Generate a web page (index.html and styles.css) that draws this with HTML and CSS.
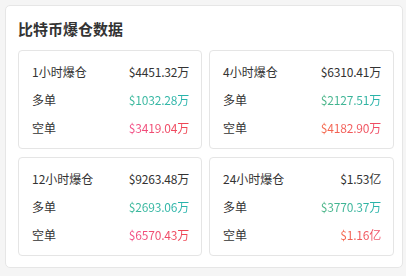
FILE: index.html
```html
<!DOCTYPE html>
<html lang="zh">
<head>
<meta charset="utf-8">
<link rel="stylesheet" href="styles.css">
</head>
<body>
<div class="panel">
  <h2 class="title">比特币爆仓数据</h2>
  <div class="grid">
    <div class="box">
      <div class="row"><span class="label">1小时爆仓</span><span class="val">$4451.32万</span></div>
      <div class="row"><span class="label">多单</span><span class="val up up-a">$1032.28万</span></div>
      <div class="row"><span class="label">空单</span><span class="val down down-a">$3419.04万</span></div>
    </div>
    <div class="box">
      <div class="row"><span class="label">4小时爆仓</span><span class="val">$6310.41万</span></div>
      <div class="row"><span class="label">多单</span><span class="val up">$2127.51万</span></div>
      <div class="row"><span class="label">空单</span><span class="val down">$4182.90万</span></div>
    </div>
    <div class="box">
      <div class="row"><span class="label">12小时爆仓</span><span class="val">$9263.48万</span></div>
      <div class="row"><span class="label">多单</span><span class="val up up-a">$2693.06万</span></div>
      <div class="row"><span class="label">空单</span><span class="val down down-a">$6570.43万</span></div>
    </div>
    <div class="box">
      <div class="row"><span class="label">24小时爆仓</span><span class="val">$1.53亿</span></div>
      <div class="row"><span class="label">多单</span><span class="val up">$3770.37万</span></div>
      <div class="row"><span class="label">空单</span><span class="val down">$1.16亿</span></div>
    </div>
  </div>
</div>
</body>
</html>
```

FILE: styles.css
```css
html, body {
  margin: 0;
  padding: 0;
  background: #f5f5f5;
}
body {
  padding: 5px 3px 0 5px;
  font-family: "Noto Sans CJK SC", "Noto Sans", sans-serif;
  color: #333;
}
.panel {
  box-sizing: border-box;
  width: 398px;
  height: 263px;
  background: #fff;
  border: 1px solid #e6e6e6;
  border-radius: 5px;
  padding: 12px 9px 12px 12px;
}
.title {
  margin: 0 0 10px 0;
  font-size: 15px;
  line-height: 22px;
  font-weight: 700;
  color: #333;
}
.grid {
  display: grid;
  grid-template-columns: 184px 185px;
  grid-auto-rows: 99px;
  column-gap: 7px;
  row-gap: 8px;
}
.box {
  box-sizing: border-box;
  border: 1px solid #e5e5e5;
  border-radius: 4px;
  padding: 6px 12px 8px 13px;
}
.row {
  display: flex;
  justify-content: space-between;
  align-items: center;
  height: 28px;
  font-size: 12px;
}
.label {
  color: #333;
}
.val {
  color: #333;
  letter-spacing: -0.2px;
}
.up, .down {
  -webkit-background-clip: text;
  background-clip: text;
  color: transparent;
}
.up {
  background-image: linear-gradient(90deg, #4cb586, #26b3ad);
}
.up-a {
  background-image: linear-gradient(90deg, #3cb89a, #26b3ad);
}
.down {
  background-image: linear-gradient(90deg, #f56a4c, #ee4866);
}
.down-a {
  background-image: linear-gradient(90deg, #f2508a, #ee4650);
}
```
